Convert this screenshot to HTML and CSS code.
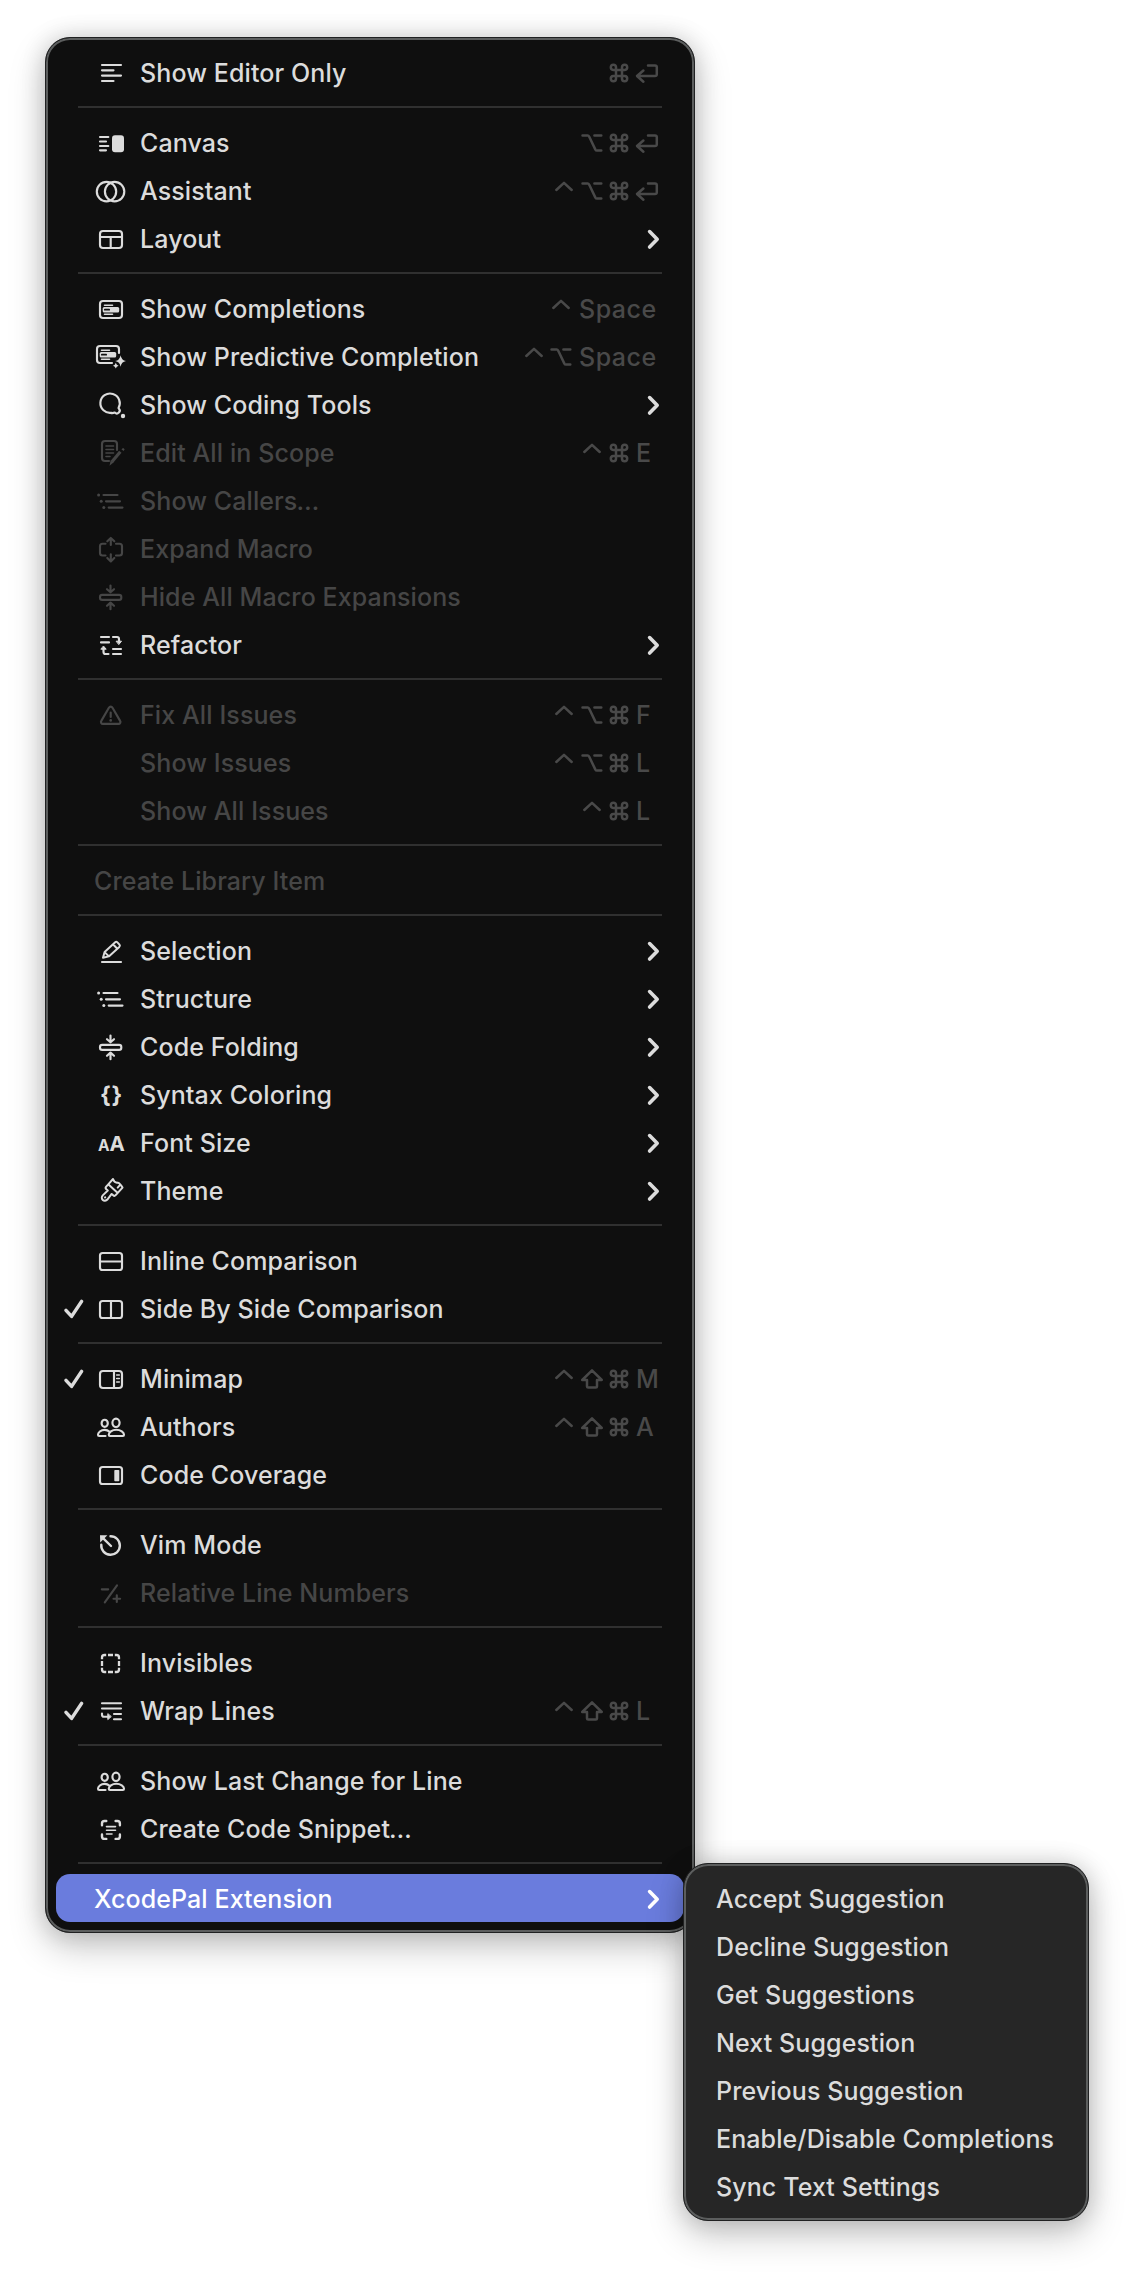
FILE: index.html
```html
<!DOCTYPE html>
<html lang="en">
<head>
<meta charset="utf-8">
<title>Editor menu</title>
<link rel="stylesheet" href="styles.css">
</head>
<body>
<svg class="sprite" aria-hidden="true">
  <symbol id="lines" viewBox="0 0 32 32"><path d="M8 8H27M8 13.3H19.5M8 18.6H27M8 24H19.5"/></symbol>
  <symbol id="canvas" viewBox="0 0 32 32"><path d="M6 10H14.3M6 14.5H12M6 19H14.3M6 23.3H12"/><rect class="solid" x="18" y="8.3" width="12" height="17" rx="3"/></symbol>
  <symbol id="assistant" viewBox="0 0 32 32"><circle cx="12.5" cy="16.6" r="9.7"/><circle cx="20.6" cy="16.6" r="9.7"/></symbol>
  <symbol id="layout" viewBox="0 0 32 32"><rect x="6" y="8" width="22" height="17" rx="3"/><path d="M6 14H28M16.7 14V25"/></symbol>
  <symbol id="completions" viewBox="0 0 32 32"><rect x="6" y="8" width="22" height="17" rx="3"/><path class="thin" d="M10.5 12.2H18.5M10.5 21.2H18.5"/><rect class="solid" x="8.7" y="14" width="16.5" height="5.4" rx="1.5"/><path class="cut" d="M10.8 16.7H15.2"/></symbol>
  <symbol id="predictive" viewBox="0 0 32 32"><path d="M18 22H6a3 3 0 0 1-3-3V8a3 3 0 0 1 3-3H22a3 3 0 0 1 3 3V12"/><path class="thin" d="M7.5 9.2H15.5M7.5 18.2H15.5"/><rect class="solid" x="5.7" y="11" width="16.5" height="5.4" rx="1.5"/><path class="cut" d="M7.8 13.7H12.2"/><path class="solid" d="M26.6 14.2Q27.4 19.2 32 20Q27.4 20.8 26.6 25.8Q25.8 20.8 21.2 20Q25.8 19.2 26.6 14.2ZM21.8 21.8Q22.4 24.1 24.6 24.7Q22.4 25.3 21.8 27.6Q21.2 25.3 19 24.7Q21.2 24.1 21.8 21.8Z"/></symbol>
  <symbol id="tools" viewBox="0 0 32 32"><path d="M24.5 19A9.7 9.7 0 1 0 17.5 23.8M24.8 19.5A2.7 2.7 0 0 1 20.8 23.6Q18.6 24.4 16.6 23.9"/><circle class="solid" cx="29" cy="27" r="2.2"/></symbol>
  <symbol id="scope" viewBox="0 0 32 32"><path d="M15 24H11a3 3 0 0 1-3-3V7a3 3 0 0 1 3-3H20a3 3 0 0 1 3 3V13"/><path class="thin" d="M12 9H19.5M12 12.5H19.5M12 16H19.5M12 19.5H16"/><path class="heavy" d="M26.3 14.8L18 24.8"/><path class="solid" d="M16.7 23.3L19.5 25.6L15.5 28.8ZM27.4 12.2l1.7-1.3 1.6 1.4-1.1 1.8z"/></symbol>
  <symbol id="structure" viewBox="0 0 32 32"><path d="M9.5 10H23.5M12 16.3H26M14.7 22.6H28.5"/><circle class="solid" cx="4.6" cy="10" r="1.5"/><circle class="solid" cx="7.2" cy="16.3" r="1.5"/><circle class="solid" cx="9.8" cy="22.6" r="1.5"/></symbol>
  <symbol id="expand" viewBox="0 0 32 32"><path d="M11.5 10.7H8.5a2.5 2.5 0 0 0-2.5 2.5V20a2.5 2.5 0 0 0 2.5 2.5H11.5M22 10.7H25.5a2.5 2.5 0 0 1 2.5 2.5V20a2.5 2.5 0 0 1-2.5 2.5H22M16.8 12V5M13.3 8.3L16.8 4.9L20.3 8.3M16.8 21.3V28.3M13.3 25L16.8 28.4L20.3 25"/></symbol>
  <symbol id="fold" viewBox="0 0 32 32"><rect x="6" y="13.9" width="21.3" height="5" rx="2.2"/><path d="M16.5 4.6V11M13 8.2L16.5 11.3L20 8.2M16.5 28.2V22M13 24.8L16.5 21.6L20 24.8"/></symbol>
  <symbol id="refactor" viewBox="0 0 32 32"><path d="M7 8H15M7 13.4H15M19 20H27M19 25H27M19 8H23a2 2 0 0 1 2 2V12M14.5 25H11.5a2 2 0 0 1-2-2V20"/><path class="solid join" d="M22.5 12.2H27.5L25 15.3ZM7.2 20.2H12.2L9.7 17.3Z"/></symbol>
  <symbol id="warn" viewBox="0 0 32 32"><path d="M14.9 8.7a2.1 2.1 0 0 1 3.6 0L26.1 21.9a1.9 1.9 0 0 1-1.7 3H9a1.9 1.9 0 0 1-1.7-3ZM16.7 13.5V18"/><circle class="solid" cx="16.7" cy="21.4" r="1.3"/></symbol>
  <symbol id="pencil" viewBox="0 0 32 32"><path d="M8 27H27"/><path class="mid" d="M9 22.8L10.6 17L21.2 7.2Q22.3 6.3 23.4 7.4L25.5 9.7Q26.4 10.8 25.3 11.9L14.8 21.4ZM19 9.3L23.3 13.7M10.8 17.4L14.5 21"/></symbol>
  <symbol id="brush" viewBox="0 0 32 32"><g transform="translate(16.4 16.5) rotate(42) translate(-17 -16.4)"><path class="mid" d="M10.6 12.5V5.4Q14.6 7.6 16.6 4.8Q18.6 3.8 23.4 5.4V12.5ZM10.6 12.5V15.6Q10.6 17.4 12.4 17.4H14.4L13.9 24.4a3.1 3.4 0 0 0 6.2 0L19.6 17.4H21.6Q23.4 17.4 23.4 15.6V12.5M19.8 5V8.6"/><circle class="solid" cx="17" cy="24.3" r="1.1"/></g></symbol>
  <symbol id="rows" viewBox="0 0 32 32"><rect x="6" y="8" width="22" height="17" rx="2.6"/><path d="M6 16.5H28"/></symbol>
  <symbol id="columns" viewBox="0 0 32 32"><rect x="6" y="8" width="22" height="17" rx="2.6"/><path d="M17 8V25"/></symbol>
  <symbol id="minimap" viewBox="0 0 32 32"><rect x="6" y="8" width="22" height="17" rx="3"/><path d="M20 8V25"/><path class="thin" d="M22.7 12H25.3M22.7 15.5H25.3M22.7 19H25.3"/></symbol>
  <symbol id="people" viewBox="0 0 32 32"><ellipse cx="10.7" cy="12.3" rx="3.1" ry="3.6"/><ellipse cx="22" cy="11.8" rx="3.6" ry="4.2"/><path d="M15.6 20.7Q13.4 18.8 10.7 18.8C6.7 18.8 4 21.7 4 23.7Q4 25 5.2 25H11.5M15.9 25Q14.8 25 14.8 23.7C14.8 21.5 17.9 18.7 22.3 18.7S30 21.5 30 23.7Q30 25 28.9 25Z"/></symbol>
  <symbol id="coverage" viewBox="0 0 32 32"><rect x="6" y="8" width="22" height="17" rx="2.6"/><rect class="solid" x="20.3" y="11" width="5" height="11.2" rx=".8"/></symbol>
  <symbol id="vim" viewBox="0 0 32 32"><path class="mid2" d="M16.5 7.2A9.3 9.3 0 1 1 7.3 15.7M17 17L9 9.2"/><path class="solid" d="M6 6.3H13.4L6.2 13.4Z"/></symbol>
  <symbol id="relative" viewBox="0 0 32 32"><path d="M7.8 12.3H14.2M23 8.4L10.8 25.4M22.8 18.4V25M19.5 21.7H26.1"/></symbol>
  <symbol id="dashed" viewBox="0 0 32 32"><path class="butt" d="M8 12.2V10.5A2.5 2.5 0 0 1 10.5 8H12.2M20.8 8H22.5A2.5 2.5 0 0 1 25 10.5V12.2M25 20.8V22.5A2.5 2.5 0 0 1 22.5 25H20.8M12.2 25H10.5A2.5 2.5 0 0 1 8 22.5V20.8M14 8H19M14 25H19M8 14V19M25 14V19"/></symbol>
  <symbol id="wrap" viewBox="0 0 32 32"><path d="M8 8.2H27M8 13.5H27M20 19H27M20 24.2H27M8 18.5V19.7a2 2 0 0 0 2 2H14"/><path class="solid join" d="M13.8 19V24.6L17 21.8Z"/></symbol>
  <symbol id="snippet" viewBox="0 0 32 32"><path class="mid2" d="M8 12.3V10.5A2.5 2.5 0 0 1 10.5 8H12.3M21.6 8H23.4A2.5 2.5 0 0 1 25.9 10.5V12.3M25.9 21.4V23.4A2.5 2.5 0 0 1 23.4 25.9H21.6M12.3 25.9H10.5A2.5 2.5 0 0 1 8 23.4V21.4"/><path class="thin" d="M12.5 13.6H21.5M12.5 17.3H21.5M12.5 21H18"/></symbol>
  <symbol id="check" viewBox="0 0 24 24"><path d="M3 13.4L8.6 19.4L18.6 4.4"/></symbol>
  <symbol id="chevron" viewBox="0 0 16 24"><path d="M3.6 4.6L11.2 12.3L3.6 20"/></symbol>
  <symbol id="ctrl" viewBox="0 0 28 24"><path d="M6.3 11L14 3.8L21.7 11"/></symbol>
  <symbol id="opt" viewBox="0 0 28 24"><path d="M4.5 4.4H9.6Q10.6 4.4 11 5.3L17.4 18.6Q17.9 19.5 18.9 19.5H23.3M16.4 4.4H23.3"/></symbol>
  <symbol id="shift" viewBox="0 0 28 24"><path d="M14 3.4L23.8 13H19V19.4Q19 20.6 17.8 20.6H10.2Q9 20.6 9 19.4V13H4.2Z"/></symbol>
  <symbol id="cmd" viewBox="0 0 28 24"><path d="M11 9H17V15H11ZM11 9H8.2A2.6 2.6 0 1 1 11 6.2ZM17 9V6.2A2.6 2.6 0 1 1 19.8 9ZM17 15H19.8A2.6 2.6 0 1 1 17 17.8ZM11 15V17.8A2.6 2.6 0 1 1 8.2 15Z"/></symbol>
  <symbol id="ret" viewBox="0 0 28 24"><path d="M15 4.4H22Q23.8 4.4 23.8 6.2V13.2Q23.8 15 22 15H4.5M10.4 9.5L4 15L10.4 20.7"/></symbol>
</svg>

<nav class="menu">
  <div class="row"><svg class="icon"><use href="#lines"/></svg><span class="label">Show Editor Only</span><span class="keys"><svg><use href="#cmd"/></svg><svg class="ret"><use href="#ret"/></svg></span></div>
  <hr>
  <div class="row"><svg class="icon"><use href="#canvas"/></svg><span class="label">Canvas</span><span class="keys"><svg><use href="#opt"/></svg><svg><use href="#cmd"/></svg><svg class="ret"><use href="#ret"/></svg></span></div>
  <div class="row"><svg class="icon"><use href="#assistant"/></svg><span class="label">Assistant</span><span class="keys"><svg><use href="#ctrl"/></svg><svg><use href="#opt"/></svg><svg><use href="#cmd"/></svg><svg class="ret"><use href="#ret"/></svg></span></div>
  <div class="row"><svg class="icon"><use href="#layout"/></svg><span class="label">Layout</span><svg class="chevron"><use href="#chevron"/></svg></div>
  <hr>
  <div class="row"><svg class="icon"><use href="#completions"/></svg><span class="label">Show Completions</span><span class="keys"><svg><use href="#ctrl"/></svg><span class="word">Space</span></span></div>
  <div class="row"><svg class="icon"><use href="#predictive"/></svg><span class="label">Show Predictive Completion</span><span class="keys"><svg><use href="#ctrl"/></svg><svg><use href="#opt"/></svg><span class="word">Space</span></span></div>
  <div class="row"><svg class="icon"><use href="#tools"/></svg><span class="label">Show Coding Tools</span><svg class="chevron"><use href="#chevron"/></svg></div>
  <div class="row off"><svg class="icon"><use href="#scope"/></svg><span class="label">Edit All in Scope</span><span class="keys"><svg><use href="#ctrl"/></svg><svg><use href="#cmd"/></svg><span class="key">E</span></span></div>
  <div class="row off"><svg class="icon"><use href="#structure"/></svg><span class="label">Show Callers<span class="dots">…</span></span></div>
  <div class="row off"><svg class="icon"><use href="#expand"/></svg><span class="label">Expand Macro</span></div>
  <div class="row off"><svg class="icon"><use href="#fold"/></svg><span class="label">Hide All Macro Expansions</span></div>
  <div class="row"><svg class="icon"><use href="#refactor"/></svg><span class="label">Refactor</span><svg class="chevron"><use href="#chevron"/></svg></div>
  <hr>
  <div class="row off"><svg class="icon"><use href="#warn"/></svg><span class="label">Fix All Issues</span><span class="keys"><svg><use href="#ctrl"/></svg><svg><use href="#opt"/></svg><svg><use href="#cmd"/></svg><span class="key">F</span></span></div>
  <div class="row off"><span class="label">Show Issues</span><span class="keys"><svg><use href="#ctrl"/></svg><svg><use href="#opt"/></svg><svg><use href="#cmd"/></svg><span class="key">L</span></span></div>
  <div class="row off"><span class="label">Show All Issues</span><span class="keys"><svg><use href="#ctrl"/></svg><svg><use href="#cmd"/></svg><span class="key">L</span></span></div>
  <hr>
  <div class="row off plain"><span class="label">Create Library Item</span></div>
  <hr>
  <div class="row"><svg class="icon"><use href="#pencil"/></svg><span class="label">Selection</span><svg class="chevron"><use href="#chevron"/></svg></div>
  <div class="row"><svg class="icon"><use href="#structure"/></svg><span class="label">Structure</span><svg class="chevron"><use href="#chevron"/></svg></div>
  <div class="row"><svg class="icon"><use href="#fold"/></svg><span class="label">Code Folding</span><svg class="chevron"><use href="#chevron"/></svg></div>
  <div class="row"><span class="icon braces">{}</span><span class="label">Syntax Coloring</span><svg class="chevron"><use href="#chevron"/></svg></div>
  <div class="row"><span class="icon sizes"><small>A</small>A</span><span class="label">Font Size</span><svg class="chevron"><use href="#chevron"/></svg></div>
  <div class="row"><svg class="icon"><use href="#brush"/></svg><span class="label">Theme</span><svg class="chevron"><use href="#chevron"/></svg></div>
  <hr>
  <div class="row"><svg class="icon"><use href="#rows"/></svg><span class="label">Inline Comparison</span></div>
  <div class="row"><svg class="check"><use href="#check"/></svg><svg class="icon"><use href="#columns"/></svg><span class="label">Side By Side Comparison</span></div>
  <hr>
  <div class="row"><svg class="check"><use href="#check"/></svg><svg class="icon"><use href="#minimap"/></svg><span class="label">Minimap</span><span class="keys"><svg><use href="#ctrl"/></svg><svg><use href="#shift"/></svg><svg><use href="#cmd"/></svg><span class="key">M</span></span></div>
  <div class="row"><svg class="icon"><use href="#people"/></svg><span class="label">Authors</span><span class="keys"><svg><use href="#ctrl"/></svg><svg><use href="#shift"/></svg><svg><use href="#cmd"/></svg><span class="key">A</span></span></div>
  <div class="row"><svg class="icon"><use href="#coverage"/></svg><span class="label">Code Coverage</span></div>
  <hr>
  <div class="row"><svg class="icon"><use href="#vim"/></svg><span class="label">Vim Mode</span></div>
  <div class="row off"><svg class="icon"><use href="#relative"/></svg><span class="label">Relative Line Numbers</span></div>
  <hr>
  <div class="row"><svg class="icon"><use href="#dashed"/></svg><span class="label">Invisibles</span></div>
  <div class="row"><svg class="check"><use href="#check"/></svg><svg class="icon"><use href="#wrap"/></svg><span class="label">Wrap Lines</span><span class="keys"><svg><use href="#ctrl"/></svg><svg><use href="#shift"/></svg><svg><use href="#cmd"/></svg><span class="key">L</span></span></div>
  <hr>
  <div class="row"><svg class="icon"><use href="#people"/></svg><span class="label">Show Last Change for Line</span></div>
  <div class="row"><svg class="icon"><use href="#snippet"/></svg><span class="label">Create Code Snippet<span class="dots">…</span></span></div>
  <hr>
  <div class="row plain active"><span class="label">XcodePal Extension</span><svg class="chevron"><use href="#chevron"/></svg></div>
  <div class="menu submenu">
    <div class="item">Accept Suggestion</div>
    <div class="item">Decline Suggestion</div>
    <div class="item">Get Suggestions</div>
    <div class="item">Next Suggestion</div>
    <div class="item">Previous Suggestion</div>
    <div class="item">Enable/Disable Completions</div>
    <div class="item">Sync Text Settings</div>
  </div>
</nav>
</body>
</html>
```
FILE: styles.css
```css
* { box-sizing: border-box; }

body {
  margin: 0;
  padding: 37px 45px;
  min-height: 2274px;
  background: #fff;
  font-family: Inter, "Liberation Sans", sans-serif;
  font-size: 25px;
  font-weight: 500;
  line-height: 48px;
  letter-spacing: .1px;
  color: #dcdcdc;
}

.sprite { position: absolute; width: 0; height: 0; }

.menu {
  position: relative;
  width: 650px;
  padding: 10px;
  border: 1px solid #202122;
  border-radius: 25px;
  background: #0f0f0f;
  box-shadow: inset 0 0 0 2px #5c5e5e, 0 14px 36px rgba(0, 0, 0, .22), 0 0 24px rgba(0, 0, 0, .16);
}

.menu hr {
  height: 2px;
  margin: 10px 22px;
  border: 0;
  background: #303030;
}

.row {
  display: grid;
  grid-template-columns: 38px 46px 1fr auto;
  align-items: center;
  height: 48px;
  border-radius: 14px;
}

.check { grid-column: 1; grid-row: 1; width: 24px; height: 24px; margin-left: 7px; margin-top: 1px; }
.icon { grid-column: 2; grid-row: 1; width: 32px; height: 32px; }
.label { grid-column: 3; grid-row: 1; padding-top: 1px; white-space: nowrap; }
.plain .label { grid-column: 2 / 4; }
.keys, .chevron { grid-column: 4; grid-row: 1; }
.dots { letter-spacing: -1px; margin-left: -1px; }

svg { display: block; fill: none; stroke: currentColor; stroke-width: 2.15; stroke-linecap: round; stroke-linejoin: round; overflow: visible; }
.solid { fill: currentColor; stroke: none; }
.join { stroke: currentColor; stroke-width: 1; }
.thin { stroke-width: 1.6; }
.mid { stroke-width: 2; }
.mid2 { stroke-width: 2.4; }
.heavy { stroke-width: 3.2; stroke-linecap: butt; }
.butt { stroke-width: 2.3; stroke-linecap: butt; }
.cut { stroke: #0f0f0f; stroke-width: 1.7; }
.check { stroke-width: 3.5; }
.chevron { width: 16px; height: 24px; margin-right: 22px; stroke-width: 3.6; }

.keys { display: flex; align-items: center; padding-right: 21px; color: #494949; }
.keys svg { width: 28px; height: 24px; margin-right: -.4px; stroke-width: 2.5; }
.keys .ret { margin: 0 2px 0 0; }
.key { width: 30px; padding: 1px 0 0 3px; }
.word { width: 88px; padding: 1px 0 0 4px; letter-spacing: .5px; }

.braces, .sizes { line-height: 32px; font-weight: 700; white-space: nowrap; }
.braces { padding-left: 6px; font-size: 23px; letter-spacing: .8px; }
.sizes { padding-left: 4px; padding-top: 1px; font-size: 20.5px; letter-spacing: 0; }
.sizes small { font-size: 15.5px; }

.off { color: #464646; }
.active { background: #6a7cdd; color: #fff; }

.submenu {
  position: absolute;
  left: 637px;
  top: 1825px;
  width: 406px;
  background: #262626;
}
.item { height: 48px; padding: 1px 0 0 22px; white-space: nowrap; }
```
